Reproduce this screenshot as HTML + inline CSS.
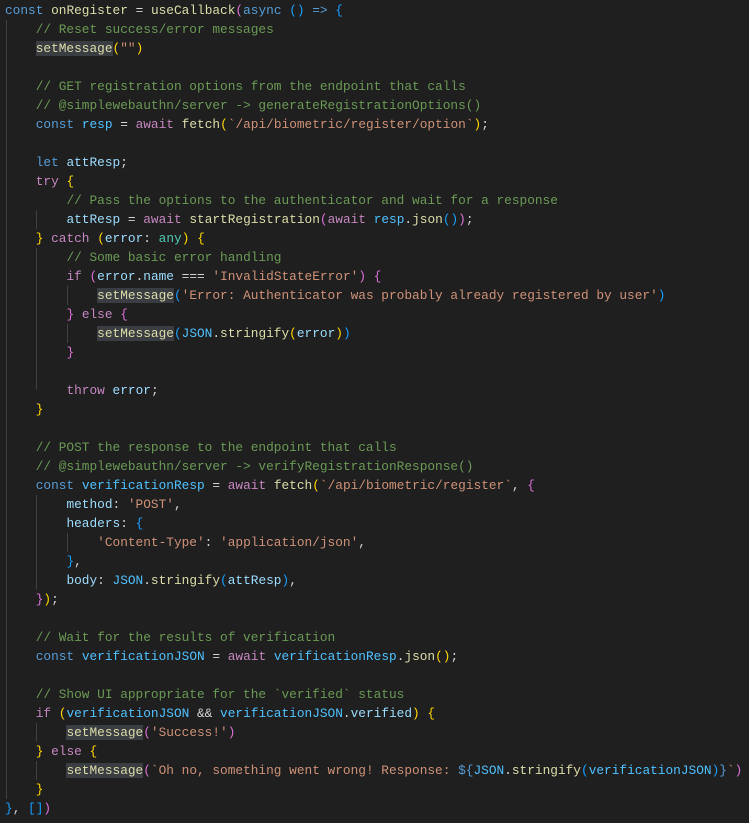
<!DOCTYPE html>
<html><head><meta charset="utf-8"><style>
html,body{margin:0;padding:0;background:#1f1f1f;width:749px;height:823px;overflow:hidden}
pre{margin:0;position:absolute;left:5px;top:1px;font-family:"Liberation Mono",monospace;font-size:12.8px;line-height:19px;color:#d4d4d4;white-space:pre}
.k{color:#569cd6}.c{color:#c586c0}.f{color:#dcdcaa}.v{color:#9cdcfe}.n{color:#4fc1ff}.s{color:#ce9178}.m{color:#6a9955}.t{color:#4ec9b0}
.g{color:#ffd700}.p{color:#da70d6}.b{color:#179fff}
.h{background:#3a3d41}
.guide{position:absolute;width:1px;background:#404040}
</style></head><body>
<div class="guide" style="left:6px;top:20px;height:779px"></div>
<div class="guide" style="left:36px;top:210px;height:19px"></div>
<div class="guide" style="left:36px;top:248px;height:142px"></div>
<div class="guide" style="left:67px;top:286px;height:19px"></div>
<div class="guide" style="left:67px;top:324px;height:19px"></div>
<div class="guide" style="left:36px;top:495px;height:95px"></div>
<div class="guide" style="left:67px;top:533px;height:19px"></div>
<div class="guide" style="left:36px;top:723px;height:19px"></div>
<div class="guide" style="left:36px;top:761px;height:19px"></div>
<pre><span class="k">const</span> <span class="f">onRegister</span> = <span class="f">useCallback</span><span class="p">(</span><span class="k">async</span> <span class="b">()</span> <span class="k">=&gt;</span> <span class="b">{</span>
    <span class="m">// Reset success/error messages</span>
    <span class="f h">setMessage</span><span class="g">(</span><span class="s">""</span><span class="g">)</span>

    <span class="m">// GET registration options from the endpoint that calls</span>
    <span class="m">// @simplewebauthn/server -&gt; generateRegistrationOptions()</span>
    <span class="k">const</span> <span class="n">resp</span> = <span class="c">await</span> <span class="f">fetch</span><span class="g">(</span><span class="s">`/api/biometric/register/option`</span><span class="g">)</span>;

    <span class="k">let</span> <span class="v">attResp</span>;
    <span class="c">try</span> <span class="g">{</span>
        <span class="m">// Pass the options to the authenticator and wait for a response</span>
        <span class="v">attResp</span> = <span class="c">await</span> <span class="f">startRegistration</span><span class="p">(</span><span class="c">await</span> <span class="n">resp</span>.<span class="f">json</span><span class="b">()</span><span class="p">)</span>;
    <span class="g">}</span> <span class="c">catch</span> <span class="g">(</span><span class="v">error</span>: <span class="t">any</span><span class="g">)</span> <span class="g">{</span>
        <span class="m">// Some basic error handling</span>
        <span class="c">if</span> <span class="p">(</span><span class="v">error</span>.<span class="v">name</span> === <span class="s">'InvalidStateError'</span><span class="p">)</span> <span class="p">{</span>
            <span class="f h">setMessage</span><span class="b">(</span><span class="s">'Error: Authenticator was probably already registered by user'</span><span class="b">)</span>
        <span class="p">}</span> <span class="c">else</span> <span class="p">{</span>
            <span class="f h">setMessage</span><span class="b">(</span><span class="n">JSON</span>.<span class="f">stringify</span><span class="g">(</span><span class="v">error</span><span class="g">)</span><span class="b">)</span>
        <span class="p">}</span>

        <span class="c">throw</span> <span class="v">error</span>;
    <span class="g">}</span>

    <span class="m">// POST the response to the endpoint that calls</span>
    <span class="m">// @simplewebauthn/server -&gt; verifyRegistrationResponse()</span>
    <span class="k">const</span> <span class="n">verificationResp</span> = <span class="c">await</span> <span class="f">fetch</span><span class="g">(</span><span class="s">`/api/biometric/register`</span>, <span class="p">{</span>
        <span class="v">method</span>: <span class="s">'POST'</span>,
        <span class="v">headers</span>: <span class="b">{</span>
            <span class="s">'Content-Type'</span>: <span class="s">'application/json'</span>,
        <span class="b">}</span>,
        <span class="v">body</span>: <span class="n">JSON</span>.<span class="f">stringify</span><span class="b">(</span><span class="v">attResp</span><span class="b">)</span>,
    <span class="p">}</span><span class="g">)</span>;

    <span class="m">// Wait for the results of verification</span>
    <span class="k">const</span> <span class="n">verificationJSON</span> = <span class="c">await</span> <span class="n">verificationResp</span>.<span class="f">json</span><span class="g">()</span>;

    <span class="m">// Show UI appropriate for the `verified` status</span>
    <span class="c">if</span> <span class="g">(</span><span class="n">verificationJSON</span> &amp;&amp; <span class="n">verificationJSON</span>.<span class="v">verified</span><span class="g">)</span> <span class="g">{</span>
        <span class="f h">setMessage</span><span class="p">(</span><span class="s">'Success!'</span><span class="p">)</span>
    <span class="g">}</span> <span class="c">else</span> <span class="g">{</span>
        <span class="f h">setMessage</span><span class="p">(</span><span class="s">`Oh no, something went wrong! Response: </span><span class="k">${</span><span class="n">JSON</span>.<span class="f">stringify</span><span class="b">(</span><span class="n">verificationJSON</span><span class="b">)</span><span class="k">}</span><span class="s">`</span><span class="p">)</span>
    <span class="g">}</span>
<span class="b">}</span>, <span class="b">[]</span><span class="p">)</span></pre>
</body></html>
